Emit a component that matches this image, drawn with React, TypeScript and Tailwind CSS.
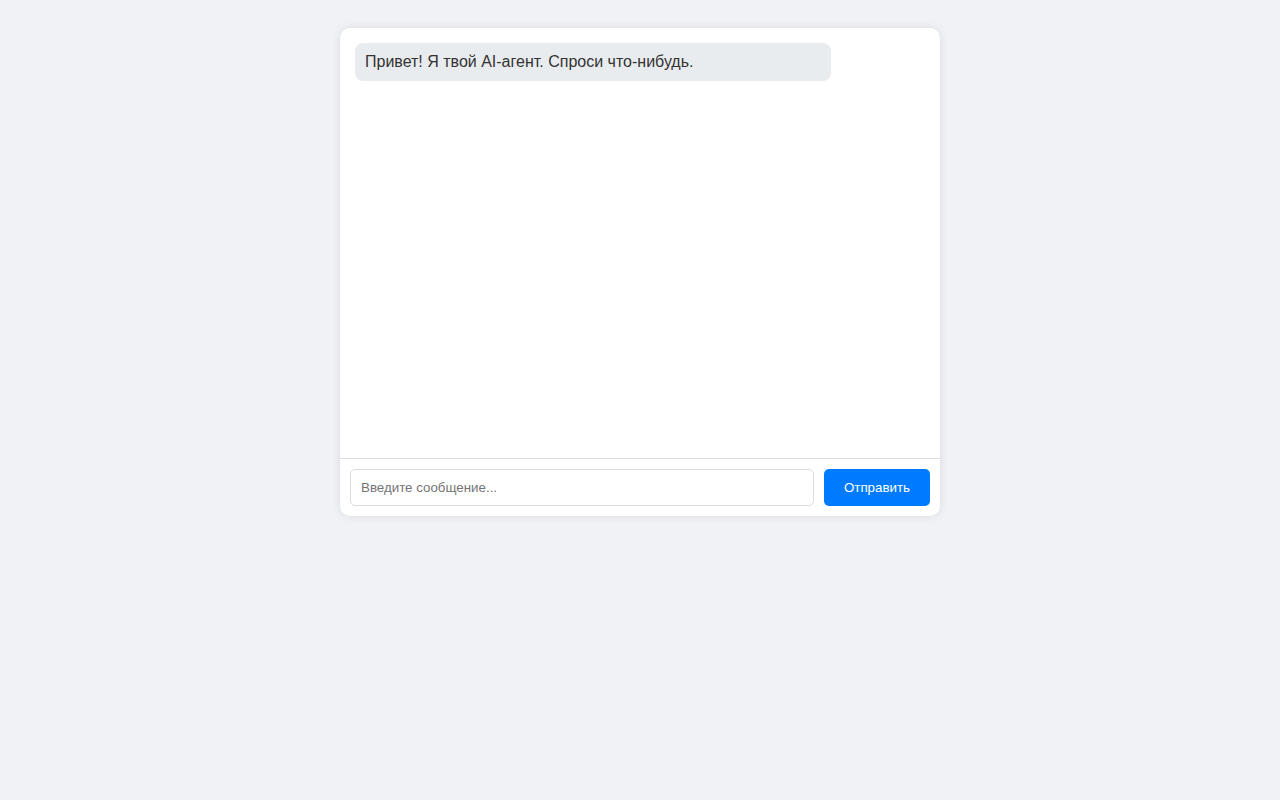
import { useState } from 'react'

export default function App() {
  const [messages, setMessages] = useState<string[]>(['Привет! Я твой AI-агент. Спроси что-нибудь.'])
  const [draft, setDraft] = useState('')

  return (
    <div className="min-h-screen bg-[#f0f2f5] pt-[28px] font-['Liberation_Sans',Arial,sans-serif]">
      <div className="mx-auto w-[600px] overflow-hidden rounded-[10px] bg-white shadow-[0_0_10px_rgba(0,0,0,0.1)]">
        <div className="flex h-[430px] flex-col items-start gap-[10px] overflow-y-auto p-[15px]">
          {messages.map((text, i) => (
            <div
              key={i}
              className="w-[476px] rounded-[8px] bg-[#e9ecef] px-[10px] py-[10px] text-[16px] leading-[18px] text-[#333]"
            >
              {text}
            </div>
          ))}
        </div>
        <div className="flex gap-[10px] border-t border-[#ddd] p-[10px]">
          <input
            value={draft}
            onChange={(e) => setDraft(e.target.value)}
            placeholder="Введите сообщение..."
            className="h-[37px] flex-1 rounded-[5px] border border-[#ddd] px-[10px] text-[13.33px] text-[#333] outline-none placeholder:text-[#757575]"
          />
          <button
            type="button"
            onClick={() => {
              const t = draft.trim()
              if (!t) return
              setMessages((m) => [...m, t])
              setDraft('')
            }}
            className="h-[37px] rounded-[5px] bg-[#007bff] px-[20px] text-[13.33px] text-white"
          >
            Отправить
          </button>
        </div>
      </div>
    </div>
  )
}
